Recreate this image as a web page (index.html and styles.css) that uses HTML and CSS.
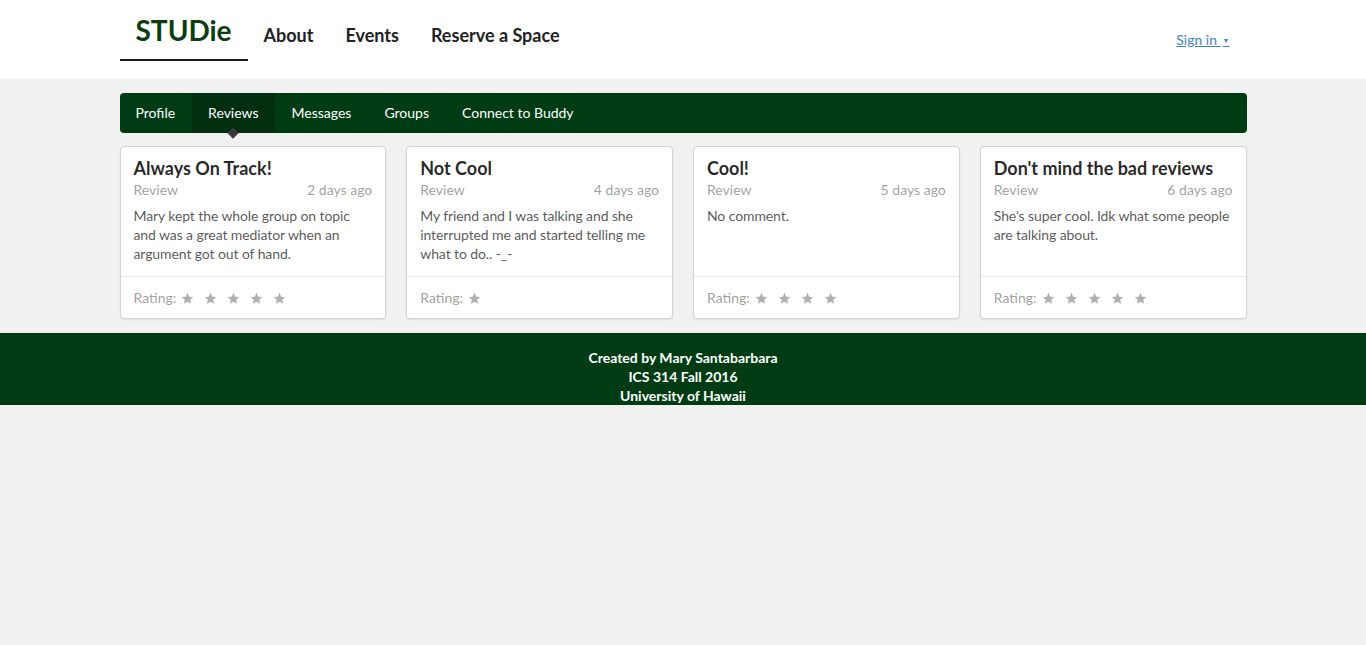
FILE: index.html
```html
<!DOCTYPE html>
<html>
<head>
<meta charset="utf-8">
<link rel="stylesheet" href="styles.css">
</head>
<body>
<header class="topbar">
  <div class="container topbar-inner">
    <nav class="mainnav">
      <a class="brand">STUDie</a>
      <a class="navitem">About</a>
      <a class="navitem">Events</a>
      <a class="navitem">Reserve a Space</a>
    </nav>
    <a class="signin">Sign in <span class="caret">▼</span></a>
  </div>
</header>

<main class="container">
  <nav class="tabs">
    <a class="tab">Profile</a>
    <a class="tab active">Reviews</a>
    <a class="tab">Messages</a>
    <a class="tab">Groups</a>
    <a class="tab">Connect to Buddy</a>
  </nav>

  <section class="cards">
    <article class="card">
      <div class="content">
        <h3 class="title">Always On Track!</h3>
        <div class="meta"><span>Review</span><span>2 days ago</span></div>
        <p class="desc">Mary kept the whole group on topic and was a great mediator when an argument got out of hand.</p>
      </div>
      <div class="extra">Rating:
        <span class="stars">
          <svg viewBox="0 0 16 16"><polygon points="8,1 10.1,5.8 15.2,6.2 11.3,9.6 12.5,14.6 8,11.9 3.5,14.6 4.7,9.6 0.8,6.2 5.9,5.8"/></svg>
          <svg viewBox="0 0 16 16"><polygon points="8,1 10.1,5.8 15.2,6.2 11.3,9.6 12.5,14.6 8,11.9 3.5,14.6 4.7,9.6 0.8,6.2 5.9,5.8"/></svg>
          <svg viewBox="0 0 16 16"><polygon points="8,1 10.1,5.8 15.2,6.2 11.3,9.6 12.5,14.6 8,11.9 3.5,14.6 4.7,9.6 0.8,6.2 5.9,5.8"/></svg>
          <svg viewBox="0 0 16 16"><polygon points="8,1 10.1,5.8 15.2,6.2 11.3,9.6 12.5,14.6 8,11.9 3.5,14.6 4.7,9.6 0.8,6.2 5.9,5.8"/></svg>
          <svg viewBox="0 0 16 16"><polygon points="8,1 10.1,5.8 15.2,6.2 11.3,9.6 12.5,14.6 8,11.9 3.5,14.6 4.7,9.6 0.8,6.2 5.9,5.8"/></svg>
        </span>
      </div>
    </article>

    <article class="card">
      <div class="content">
        <h3 class="title">Not Cool</h3>
        <div class="meta"><span>Review</span><span>4 days ago</span></div>
        <p class="desc">My friend and I was talking and she interrupted me and started telling me what to do.. -_-</p>
      </div>
      <div class="extra">Rating:
        <span class="stars">
          <svg viewBox="0 0 16 16"><polygon points="8,1 10.1,5.8 15.2,6.2 11.3,9.6 12.5,14.6 8,11.9 3.5,14.6 4.7,9.6 0.8,6.2 5.9,5.8"/></svg>
        </span>
      </div>
    </article>

    <article class="card">
      <div class="content">
        <h3 class="title">Cool!</h3>
        <div class="meta"><span>Review</span><span>5 days ago</span></div>
        <p class="desc">No comment.</p>
      </div>
      <div class="extra">Rating:
        <span class="stars">
          <svg viewBox="0 0 16 16"><polygon points="8,1 10.1,5.8 15.2,6.2 11.3,9.6 12.5,14.6 8,11.9 3.5,14.6 4.7,9.6 0.8,6.2 5.9,5.8"/></svg>
          <svg viewBox="0 0 16 16"><polygon points="8,1 10.1,5.8 15.2,6.2 11.3,9.6 12.5,14.6 8,11.9 3.5,14.6 4.7,9.6 0.8,6.2 5.9,5.8"/></svg>
          <svg viewBox="0 0 16 16"><polygon points="8,1 10.1,5.8 15.2,6.2 11.3,9.6 12.5,14.6 8,11.9 3.5,14.6 4.7,9.6 0.8,6.2 5.9,5.8"/></svg>
          <svg viewBox="0 0 16 16"><polygon points="8,1 10.1,5.8 15.2,6.2 11.3,9.6 12.5,14.6 8,11.9 3.5,14.6 4.7,9.6 0.8,6.2 5.9,5.8"/></svg>
        </span>
      </div>
    </article>

    <article class="card">
      <div class="content">
        <h3 class="title">Don't mind the bad reviews</h3>
        <div class="meta"><span>Review</span><span>6 days ago</span></div>
        <p class="desc">She's super cool. Idk what some people are talking about.</p>
      </div>
      <div class="extra">Rating:
        <span class="stars">
          <svg viewBox="0 0 16 16"><polygon points="8,1 10.1,5.8 15.2,6.2 11.3,9.6 12.5,14.6 8,11.9 3.5,14.6 4.7,9.6 0.8,6.2 5.9,5.8"/></svg>
          <svg viewBox="0 0 16 16"><polygon points="8,1 10.1,5.8 15.2,6.2 11.3,9.6 12.5,14.6 8,11.9 3.5,14.6 4.7,9.6 0.8,6.2 5.9,5.8"/></svg>
          <svg viewBox="0 0 16 16"><polygon points="8,1 10.1,5.8 15.2,6.2 11.3,9.6 12.5,14.6 8,11.9 3.5,14.6 4.7,9.6 0.8,6.2 5.9,5.8"/></svg>
          <svg viewBox="0 0 16 16"><polygon points="8,1 10.1,5.8 15.2,6.2 11.3,9.6 12.5,14.6 8,11.9 3.5,14.6 4.7,9.6 0.8,6.2 5.9,5.8"/></svg>
          <svg viewBox="0 0 16 16"><polygon points="8,1 10.1,5.8 15.2,6.2 11.3,9.6 12.5,14.6 8,11.9 3.5,14.6 4.7,9.6 0.8,6.2 5.9,5.8"/></svg>
        </span>
      </div>
    </article>
  </section>
</main>

<footer class="footer">
  <div>Created by Mary Santabarbara</div>
  <div>ICS 314 Fall 2016</div>
  <div>University of Hawaii</div>
</footer>
</body>
</html>
```

FILE: styles.css
```css
* { box-sizing: border-box; }
html, body { margin: 0; padding: 0; }
body {
  background: #f2f1f1;
  font-family: Lato, "Open Sans", sans-serif;
  font-size: 14px;
  line-height: 1.4285em;
  color: rgba(0,0,0,0.87);
}
a { text-decoration: none; color: inherit; cursor: pointer; }
.container { width: 1127px; margin: 0 auto; }

.topbar { background: #fff; height: 79px; }
.topbar-inner { display: flex; justify-content: space-between; align-items: flex-start; height: 79px; }
.mainnav { display: flex; align-items: flex-start; }
.brand {
  font-size: 28px; font-weight: 700; color: #0b3d0f;
  line-height: 34px; padding: 13px 16px 12px 16px; width: 128px;
  border-bottom: 2px solid #1b1c1d;
}
.navitem {
  font-size: 18px; font-weight: 700; color: #222;
  line-height: 22px; padding: 24px 16px 0 16px;
}
.signin {
  margin-top: 30px; margin-right: 17px;
  color: #4183c4; text-decoration: underline; font-size: 14px; line-height: 20px;
}
.caret { font-size: 7px; vertical-align: 2px; margin-left: 2px; }

.tabs {
  margin-top: 14px; height: 40px; background: #003c13;
  border-radius: 4px; display: flex; overflow: visible;
}
.tab {
  position: relative; color: #fff; font-size: 14px; line-height: 40px;
  padding: 0 16px 0 16px; margin-right: 1px;
}
.tab:first-child { border-radius: 4px 0 0 4px; }
.tab.active { background: #012f0f; }
.tab.active::after {
  content: ""; position: absolute; left: 50%; bottom: -4px;
  width: 8px; height: 8px; background: #3a3a3a;
  transform: translateX(-50%) rotate(45deg);
}

.cards {
  margin-top: 13px; display: grid; grid-template-columns: repeat(4, 1fr); gap: 20px;
}
.card {
  background: #fff; border: 1px solid #d4d4d5; border-radius: 4px;
  box-shadow: 0 1px 2px rgba(0,0,0,0.08);
  display: flex; flex-direction: column;
}
.content { flex: 1; padding: 13px 13px 13px 13px; }
.title {
  margin: -3px 0 0; font-size: 18px; font-weight: 700; line-height: 23px;
  color: rgba(0,0,0,0.85);
}
.meta { display: flex; justify-content: space-between; color: rgba(0,0,0,0.4); line-height: 20px; }
.desc { margin: 6px 0 0; color: rgba(0,0,0,0.68); line-height: 19px; letter-spacing: -0.1px; }
.extra {
  border-top: 1px solid rgba(34,36,38,0.1);
  padding: 11px 13px 10px; line-height: 20px; color: rgba(0,0,0,0.4);
  display: flex; align-items: center;
}
.stars { display: flex; gap: 10px; margin-left: 5px; }
.stars svg { width: 13px; height: 13px; fill: #b0b0b0; }

.footer {
  margin-top: 14px; background: #003c13; color: #fff; text-align: center;
  font-weight: 700; line-height: 19px; padding: 15px 0 0; height: 72px;
}
```
